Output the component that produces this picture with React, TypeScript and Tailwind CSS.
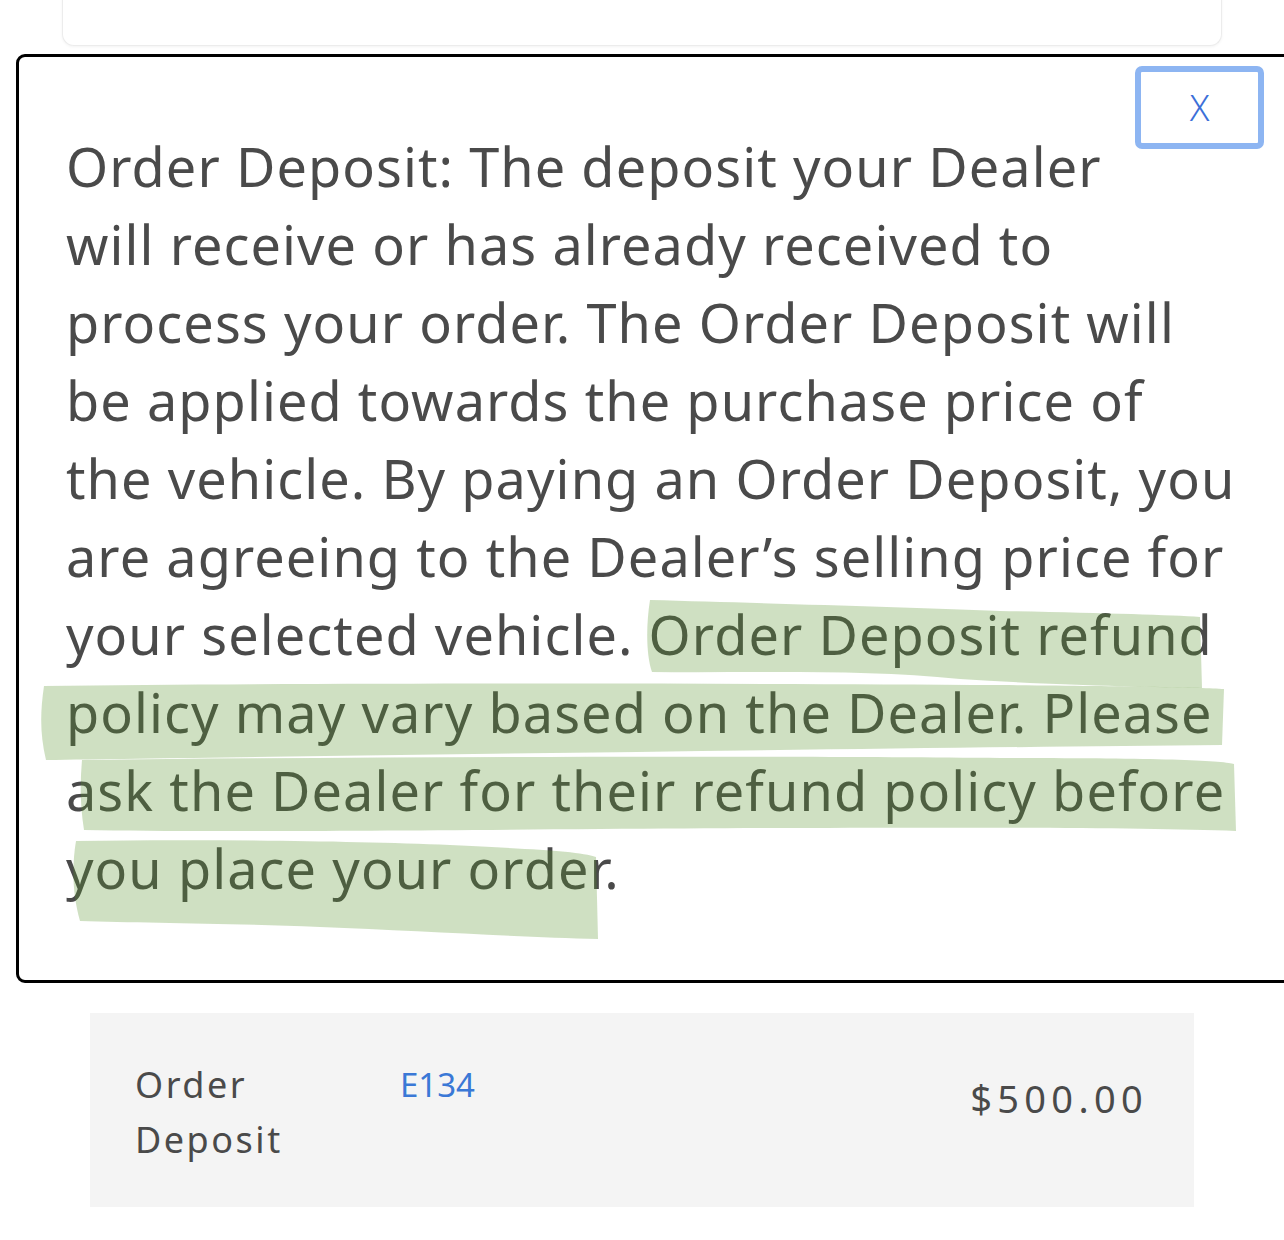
import React from 'react';

const lines = [
  'Order Deposit: The deposit your Dealer',
  'will receive or has already received to',
  'process your order. The Order Deposit will',
  'be applied towards the purchase price of',
  'the vehicle. By paying an Order Deposit, you',
  'are agreeing to the Dealer\u2019s selling price for',
  'your selected vehicle. Order Deposit refund',
  'policy may vary based on the Dealer. Please',
  'ask the Dealer for their refund policy before',
  'you place your order.',
];

// highlighter strokes drawn over the text
const Highlight: React.FC = () => (
  <svg
    className="pointer-events-none absolute left-0 top-0"
    width="1284"
    height="1000"
    viewBox="0 0 1284 1000"
  >
    <g fill="#5a942d" fillOpacity="0.29">
      <path d="M650 543 C760 546 900 550 1000 554 C1100 556 1170 558 1200 560 L1202 631 C1150 630 1050 628 960 622 C860 612 760 616 652 615 C646 598 646 568 650 543 Z" />
      <path d="M44 629 C300 626 700 626 1000 628 C1120 629 1200 630 1224 632 L1222 688 C1000 690 700 694 400 698 C250 700 120 702 46 703 C40 678 40 656 44 629 Z" />
      <path d="M82 703 C400 699 800 699 1000 701 C1150 701 1220 703 1234 707 L1236 774 C1120 770 900 770 600 772 C350 774 180 775 84 773 C80 748 80 726 82 703 Z" />
      <path d="M76 784 C200 782 350 784 450 788 C530 792 580 794 596 800 L598 882 C520 880 420 874 320 870 C220 866 140 866 80 864 C72 836 72 808 76 784 Z" />
    </g>
  </svg>
);

export default function App() {
  return (
    <div className="relative min-h-[1240px] overflow-hidden bg-white" style={{ fontFamily: '"Noto Sans", sans-serif' }}>
      {/* card behind the modal */}
      <div className="ml-[62px] -mt-[10px] h-[56px] w-[1160px] rounded-b-xl border border-t-0 border-[#ececec] bg-white shadow-[0_1px_3px_rgba(0,0,0,0.05)]" />

      {/* modal */}
      <div className="relative ml-[16px] mt-[8px] w-[1290px] rounded-[9px] border-[3px] border-black bg-white pb-[73px] pl-[47px] pt-[9px]">
        <button className="float-right mr-[39px] flex h-[83px] w-[129px] items-center justify-center rounded-[7px] border-[6px] border-[#8db5f2] bg-white text-[36px] font-light text-[#3c6fd8]">
          X
        </button>
        <div className="relative pt-[61px] text-[54px] leading-[78px] tracking-[0.02em] text-[#4a4a4a]">
          {lines.map((l) => (
            <div key={l} className="whitespace-nowrap">{l}</div>
          ))}
        </div>
        <div className="clear-both" />
        <div className="absolute -left-[19px] top-0">
          <Highlight />
        </div>
      </div>

      {/* deposit row */}
      <div className="ml-[90px] mt-[30px] flex h-[194px] w-[1104px] items-start bg-[#f4f4f4] pl-[45px] pr-[46px] pt-[44px] text-[#4a4a4a]">
        <div className="w-[265px] text-[36px] leading-[55px] tracking-[0.07em]">
          Order
          <br />
          Deposit
        </div>
        <div className="text-[33px] leading-[55px] text-[#3a78d6]">E134</div>
        <div className="ml-auto mt-[14px] text-[38px] leading-[55px] tracking-[0.14em]">$500.00</div>
      </div>
    </div>
  );
}
